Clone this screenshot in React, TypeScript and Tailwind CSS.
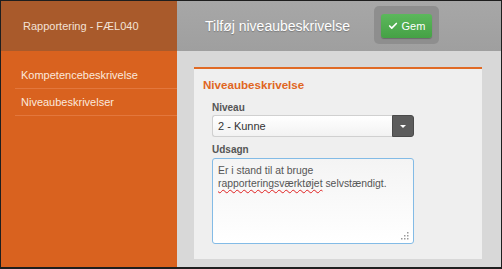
import { Check } from "lucide-react"

const font = { fontFamily: '"Liberation Sans", Arial, sans-serif' }

function ResizeGrip() {
  const dots = [
    [6, 0], [6, 3], [3, 3], [6, 6], [3, 6], [0, 6],
  ]
  return (
    <svg width="8" height="8" viewBox="0 0 8 8" className="absolute bottom-[3px] right-[4px]">
      {dots.map(([x, y], i) => (
        <rect key={i} x={x} y={y} width="1.5" height="1.5" fill="#9a9a9a" />
      ))}
    </svg>
  )
}

export default function App() {
  return (
    <div
      style={font}
      className="w-[502px] h-[269px] border-[#1e1e1e] border-t border-l border-r border-b-2 bg-[#d8d8d8] flex flex-col overflow-hidden"
    >
      {/* Top bar */}
      <div className="flex h-[50px] shrink-0">
        <div className="w-[176px] bg-[#a95a2b] flex items-center pl-[22px] text-[11px] text-[#f3e2d6]">
          Rapportering - FÆL040
        </div>
        <div className="flex-1 bg-gradient-to-b from-[#a7a7a7] to-[#9f9f9f] flex items-center">
          <span className="ml-[28px] text-[14px] text-white [text-shadow:0_1px_1px_rgba(0,0,0,0.25)]">
            Tilføj niveaubeskrivelse
          </span>
          <div className="ml-[24px] mt-[-2px] rounded-[5px] bg-[#8e8e8e] px-[7px] pt-[8px] pb-[6px]">
            <button className="flex items-center gap-[4px] h-[24px] w-[51px] justify-center rounded-[3px] bg-gradient-to-b from-[#5cb85c] to-[#45a145] text-[11px] text-white shadow-[0_1px_1px_rgba(0,0,0,0.25)]">
              <Check size={10} strokeWidth={4} />
              <span>Gem</span>
            </button>
          </div>
        </div>
      </div>

      <div className="flex flex-1 min-h-0">
        {/* Sidebar */}
        <div className="w-[176px] bg-[#d9621f] pt-[11px] pl-[14px] text-[11px] text-[#fbe9dd]">
          <div className="h-[27px] flex items-center pl-[6px] border-b border-[#e3773d]">Kompetencebeskrivelse</div>
          <div className="h-[27px] flex items-center pl-[6px] border-b border-[#e3773d]">Niveaubeskrivelser</div>
        </div>

        {/* Content */}
        <div className="flex-1 pl-[17px] pr-[19px] pt-[16px]">
          <div className="border-t-2 border-[#e06a25] bg-[#efefef] pt-[8px] pb-[15px] pl-[9px]">
            <h2 className="text-[11.6px] leading-[16px] font-bold text-[#e0661f]">Niveaubeskrivelse</h2>
            <div className="pl-[9px]">
              <div className="mt-[8px] h-[14px] leading-[14px] text-[10px] font-bold text-[#555]">Niveau</div>
              <div className="flex h-[22px] w-[202px]">
                <div className="flex-1 flex items-center pl-[5px] text-[11px] text-[#333] border border-r-0 border-[#d0d0d0] rounded-l-[3px] bg-gradient-to-b from-white to-[#f2f2f2]">
                  2 - Kunne
                </div>
                <div className="w-[22px] flex items-center justify-center bg-[#5c5c5c] rounded-r-[3px] border border-[#4a4a4a]">
                  <div className="w-0 h-0 border-l-[3px] border-r-[3px] border-t-[3px] border-l-transparent border-r-transparent border-t-white" />
                </div>
              </div>
              <div className="mt-[6px] h-[14px] leading-[14px] text-[10px] font-bold text-[#555]">Udsagn</div>
              <div className="relative mt-[1px] h-[86px] w-[202px] rounded-[3px] border border-[#83bbe6] bg-gradient-to-b from-[#f4f4f4] to-white pl-[5px] pt-[5px] pr-[4px] text-[10.4px] leading-[13px] text-[#555]">
                Er i stand til at bruge{" "}
                <span className="underline decoration-wavy decoration-[#e02020] decoration-[1px] underline-offset-[2px]">
                  rapporteringsværktøjet
                </span>{" "}
                selvstændigt.
                <ResizeGrip />
              </div>
            </div>
          </div>
        </div>
      </div>
    </div>
  )
}
